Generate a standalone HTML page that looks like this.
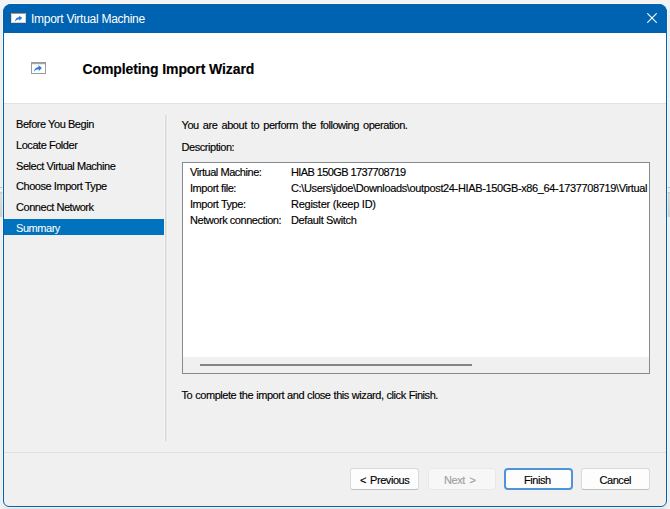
<!DOCTYPE html>
<html><head><meta charset="utf-8">
<style>
*{margin:0;padding:0;box-sizing:border-box}
html,body{width:670px;height:509px;overflow:hidden;background:#f3f3f3;font-family:"Liberation Sans",sans-serif;position:relative}
.a{position:absolute}
.t{position:absolute;white-space:nowrap;color:#000;font-size:11px;line-height:13px;letter-spacing:-0.45px;-webkit-text-stroke-width:0.15px}
#frame{position:absolute;left:3px;top:4px;width:664px;height:503px;border:1px solid #0063b1;border-radius:8px 8px 6px 6px;background:#f0f0f0;box-shadow:0 0 0 1px rgba(255,255,255,0.6),0 2px 4px rgba(0,0,0,0.12)}
</style></head><body>
<div class="a" style="left:0;top:187px;width:3px;height:1px;background:#c4c4c4"></div>
<div class="a" style="left:0;top:192px;width:3px;height:25px;background:linear-gradient(#c8c8c8,#e2dfdc 10%,#d6d3cf)"></div>
<div class="a" style="left:667px;top:187px;width:3px;height:1px;background:#c4c4c4"></div>
<div class="a" style="left:667px;top:192px;width:3px;height:25px;background:linear-gradient(#c8c8c8,#e2dfdc 10%,#d6d3cf)"></div>
<div id="frame"></div>
<!-- title bar -->
<div class="a" style="left:3px;top:4px;width:664px;height:29px;background:#0063b1;border-radius:8px 8px 0 0"></div>
<svg class="a" style="left:11px;top:13px" width="15" height="10" viewBox="0 0 15 10"><rect x="0.5" y="0.5" width="14" height="9" fill="#fff" stroke="#e2d3c4"/><rect x="0.5" y="0" width="14" height="1" fill="#a89582"/><path d="M3.9 8.7 C4.2 6 6 4.3 8.3 4.1 L8.2 2.5 L11.2 5 L8.3 7.7 L8.3 6.2 C6.5 6.2 5 7.2 3.9 8.7 Z" fill="#2a7bd0"/></svg>
<div class="t" style="left:31px;top:12px;color:#fff;font-size:12px;letter-spacing:-0.27px;line-height:14px;-webkit-text-stroke-width:0">Import Virtual Machine</div>
<svg class="a" style="left:647px;top:13px" width="10" height="10" viewBox="0 0 10 10"><path d="M0.3 0.3 L9.7 9.7 M9.7 0.3 L0.3 9.7" stroke="#fff" stroke-width="1.1"/></svg>
<!-- header -->
<div class="a" style="left:4px;top:33px;width:662px;height:70px;background:#fff"></div>
<div class="a" style="left:4px;top:103px;width:662px;height:1px;background:#e2e2e2"></div>
<svg class="a" style="left:31px;top:62px" width="15" height="12" viewBox="0 0 15 12"><rect x="0.5" y="0.5" width="14" height="11" fill="#fff" stroke="#9a9a9a"/><rect x="1" y="1" width="13" height="1.2" fill="#a3a3a3"/><path d="M2.8 9.9 C3.2 7.2 5 5.3 7.6 5.1 L7.4 3 L10.9 5.9 L7.8 8.9 L7.7 7.3 C5.6 7.3 4 8.3 2.8 9.9 Z" fill="#2b7bd2"/></svg>
<div class="t" style="left:82.5px;top:60.5px;font-size:14px;font-weight:bold;line-height:16px;letter-spacing:-0.1px">Completing Import Wizard</div>
<!-- nav -->
<div class="a" style="left:4px;top:219px;width:160px;height:16px;background:#0072be"></div>
<div class="t" style="left:16px;top:118px">Before You Begin</div>
<div class="t" style="left:16px;top:139px">Locate Folder</div>
<div class="t" style="left:16px;top:159.5px">Select Virtual Machine</div>
<div class="t" style="left:16px;top:180px">Choose Import Type</div>
<div class="t" style="left:16px;top:201px">Connect Network</div>
<div class="t" style="left:16px;top:221.5px;color:#fff;-webkit-text-stroke-width:0.05px">Summary</div>
<div class="a" style="left:164px;top:115px;width:4px;height:326px;background:linear-gradient(90deg,#f4f4f4 25%,#dadada 25%,#dadada 50%,#e3e3e3 50%,#e3e3e3 75%,#f4f4f4 75%)"></div>
<!-- content -->
<div class="t" style="left:181.5px;top:119px;word-spacing:1.5px">You are about to perform the following operation.</div>
<div class="t" style="left:181.5px;top:141px">Description:</div>
<div class="a" style="left:182px;top:162px;width:468px;height:212px;border:1px solid #868a91;background:#fff;overflow:hidden">
  <div class="t" style="left:7px;top:2.5px">Virtual Machine:</div>
  <div class="t" style="left:7px;top:18.5px">Import file:</div>
  <div class="t" style="left:7px;top:34.5px">Import Type:</div>
  <div class="t" style="left:7px;top:50.5px">Network connection:</div>
  <div class="t" style="left:108px;top:2.5px;letter-spacing:-0.6px">HIAB 150GB 1737708719</div>
  <div class="t" style="left:108px;top:18.5px;letter-spacing:-0.36px">C:\Users\jdoe\Downloads\outpost24-HIAB-150GB-x86_64-1737708719\Virtual</div>
  <div class="t" style="left:108px;top:34.5px;letter-spacing:-0.25px">Register (keep ID)</div>
  <div class="t" style="left:108px;top:50.5px;letter-spacing:-0.35px">Default Switch</div>
  <div class="a" style="left:0;top:194px;width:466px;height:16px;background:#f0f0f0"></div>
  <div class="a" style="left:17px;top:201px;width:272px;height:2px;background:#858585"></div>
</div>
<div class="t" style="left:181.5px;top:388.5px;word-spacing:0.4px">To complete the import and close this wizard, click Finish.</div>
<div class="a" style="left:4px;top:452px;width:662px;height:1px;background:#e0e0e0"></div>
<!-- buttons -->
<div class="a" style="left:350px;top:468px;width:69px;height:22px;border:1px solid #dadada;border-bottom-color:#c0c0c0;border-radius:3px;background:#fdfdfd"></div>
<div class="a" style="left:428px;top:468px;width:68px;height:22px;border:1px solid #e8e8e8;border-radius:3px;background:#f7f7f7"></div>
<div class="a" style="left:504px;top:468px;width:69px;height:22px;border:2px solid #4f93d8;border-radius:4px;background:#fdfdfd"></div>
<div class="a" style="left:581px;top:468px;width:69px;height:22px;border:1px solid #dadada;border-bottom-color:#c0c0c0;border-radius:3px;background:#fdfdfd"></div>
<div class="t" style="left:360px;top:473.5px;word-spacing:1.5px">&lt; Previous</div>
<div class="t" style="left:444px;top:473.5px;color:#a0a0a0;word-spacing:2px">Next &gt;</div>
<div class="t" style="left:524px;top:473.5px">Finish</div>
<div class="t" style="left:599.5px;top:473.5px">Cancel</div>
</body></html>
